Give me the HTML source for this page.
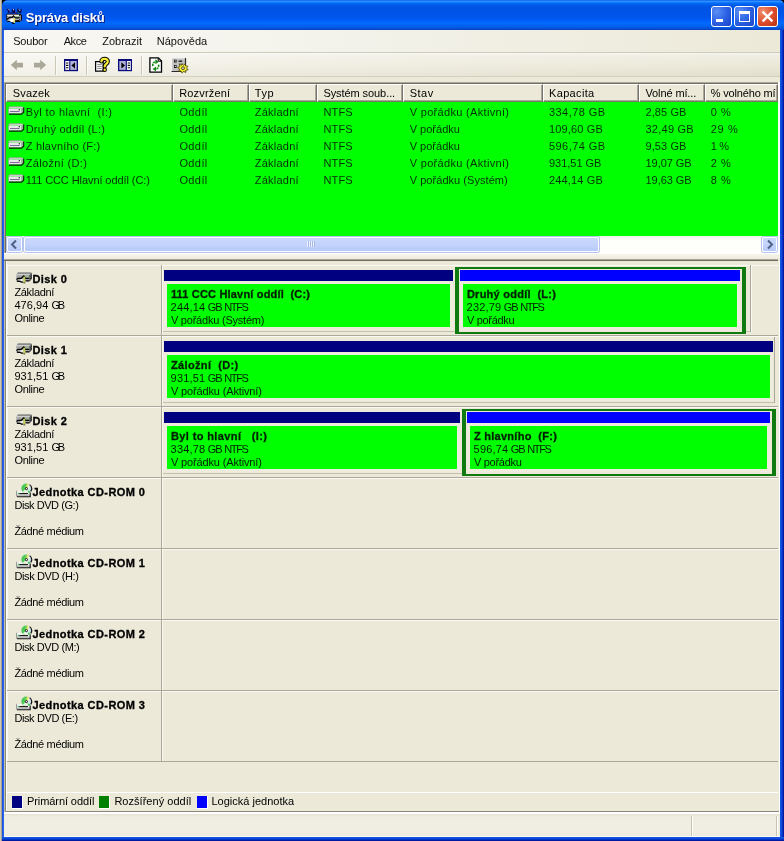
<!DOCTYPE html>
<html><head><meta charset="utf-8"><title>Správa disků</title>
<style>
*{box-sizing:border-box;margin:0;padding:0}
html,body{width:784px;height:841px;overflow:hidden;background:#000}
body{font-family:"Liberation Sans","DejaVu Sans",sans-serif;font-size:11px;color:#000;position:relative}
div,span,svg{position:absolute}
#strip{left:0;top:0;width:2px;height:841px;background:linear-gradient(to right,#cfc8b2 0,#cfc8b2 1px,#a6a194 1px,#a6a194 2px)}
#win{left:2px;top:0;width:782px;height:841px;background:#0a3fd8;border-radius:6px 5px 0 0;overflow:hidden}
#title{left:0;top:0;width:782px;height:30px;background:linear-gradient(to bottom,#0058ee 0%,#3593ff 4%,#288eff 6%,#127dff 8%,#036ffc 10%,#0262ee 14%,#0057e5 20%,#0054e3 24%,#0055eb 56%,#005bf5 66%,#026afe 76%,#0062ef 86%,#0058e0 93%,#0b48cc 97%,#0a40c0 100%)}
.tt{font:bold 13px "Liberation Sans",sans-serif;color:#fff;text-shadow:1px 1px 0 #0a1883}
.cb{top:6px;width:21px;height:21px;border:1px solid #fff;border-radius:3px;background:radial-gradient(circle at 25% 25%,#5a8ff5 0,#2c62e4 50%,#1a44c4 100%)}
#client{left:2px;top:30px;width:776px;height:807px;background:#ece9d8}
#fl{left:0;top:30px;width:2px;height:811px;background:linear-gradient(to right,#1a4edc,#2a6af0)}
#fr{left:778px;top:30px;width:4px;height:811px;background:linear-gradient(to right,#1557e0 0,#0a44d8 50%,#0023b8 75%,#00138c 100%)}
#fb{left:0;top:837px;width:782px;height:4px;background:linear-gradient(to bottom,#1557e0 0,#0a44d8 50%,#0023b8 75%,#00138c 100%)}
.t{white-space:pre}
.row{color:#043004}
.b{font-weight:bold;-webkit-text-stroke:.3px currentColor}
.p{color:#012001}
</style></head><body>
<div id="strip"></div>
<div id="win"><div id="title"></div>
<div id="client"></div><div id="fl"></div><div id="fr"></div><div id="fb"></div></div>
<div id="pg" style="left:0;top:0;width:784px;height:841px;will-change:transform">
<span class="t tt" style="left:25.70px;top:10px;letter-spacing:-0.176px;">Správa disků</span>
<svg width="17" height="17" viewBox="0 0 17 17" style="left:6px;top:8px"><path d="M.5 1.5L2.5 .5L4 2.5L3 4.5H6.5L5.5 2L7.5 .8L9 1.5V4.5H11.5L11 1L12.5 .5L13.5 2.5L15.5 .5V4L14.5 5.5H1L2.5 3.5Z" fill="#0a0a50"/><path d="M2.5 1.2L3.6 2.4M13 1.6L14.2 2.8M7 2L8 1.4" stroke="#fff" stroke-width=".9"/><path d="M11.5 4.2L13.5 5.2" stroke="#2a9a5a" stroke-width="1"/><path d="M9 4.5L10 5.2" stroke="#b02040" stroke-width="1"/><path d="M.8 6.5H13.5L15.5 7V12L14 13.5H1.5L.8 12.5Z" fill="#b4b4b4" stroke="#000" stroke-width=".9"/><path d="M1.2 7.3H13" stroke="#f0f0f0" stroke-width="1.3"/><path d="M9 8.2H13V9.6H9Z" fill="#8fbf8f"/><path d="M13.6 7.2V13M15 7.4V12.4" stroke="#000" stroke-width=".9" stroke-dasharray="1 1"/><path d="M1 11.5L3.5 9.5H6L7.5 8L9 9.8H13" fill="none" stroke="#000" stroke-width="1.3"/><path d="M4 12.8h9.5" stroke="#000" stroke-width="1.3"/><ellipse cx="6.2" cy="12.3" rx="2.3" ry="2" fill="#fff"/><path d="M5.5 14.5L7.5 15.5L9 14.5" fill="none" stroke="#000" stroke-width="1.2"/><rect x="7.6" y="9.8" width="1.5" height="5.2" fill="#e8e060"/></svg>
<div class="cb" style="left:711px;top:6px;width:21px;height:21px;"><div style="left:4px;top:12px;width:7px;height:3px;background:#fff"></div></div>
<div class="cb" style="left:734px;top:6px;width:21px;height:21px;"><div style="left:4px;top:4px;width:11px;height:11px;border:1px solid #fff;border-top-width:3px"></div></div>
<div class="cb" style="left:757px;top:6px;width:21px;height:21px;background:radial-gradient(circle at 25% 25%,#f09070 0,#dd5030 50%,#b8300c 100%)"><svg width="19" height="19" viewBox="0 0 19 19" style="left:0;top:0"><path d="M4.6 4.6L14.4 14.4M14.4 4.6L4.6 14.4" stroke="#fff" stroke-width="2.3" stroke-linecap="butt"/></svg></div>
<div style="left:4px;top:30px;width:776px;height:22px;background:linear-gradient(to right,#f8f7f3 0,#f3f2ea 45%,#ece9d8 100%)"></div>
<span class="t" style="left:13.20px;top:35px;letter-spacing:-0.197px;color:#111">Soubor</span>
<span class="t" style="left:63.70px;top:35px;letter-spacing:-0.423px;color:#111">Akce</span>
<span class="t" style="left:102.20px;top:35px;letter-spacing:0.007px;color:#111">Zobrazit</span>
<span class="t" style="left:156.70px;top:35px;letter-spacing:0.049px;color:#111">Nápověda</span>
<div style="left:4px;top:52px;width:776px;height:1px;background:#cfccbe"></div>
<div style="left:4px;top:53px;width:776px;height:23px;background:linear-gradient(to right,rgba(255,255,255,.55) 0,rgba(255,255,255,.25) 45%,rgba(255,255,255,0) 100%),linear-gradient(to bottom,#f6f5ee 0,#efede2 3px,#ece9d9 50%,#e2dfcd 100%)"></div>
<div style="left:4px;top:76px;width:776px;height:1px;background:#d2cfbf"></div>
<div style="left:55px;top:56px;width:1px;height:19px;background:#cbc8b8"></div>
<div style="left:56px;top:56px;width:1px;height:19px;background:#fbfaf7"></div>
<div style="left:86px;top:56px;width:1px;height:19px;background:#cbc8b8"></div>
<div style="left:87px;top:56px;width:1px;height:19px;background:#fbfaf7"></div>
<div style="left:141px;top:56px;width:1px;height:19px;background:#cbc8b8"></div>
<div style="left:142px;top:56px;width:1px;height:19px;background:#fbfaf7"></div>
<svg width="200" height="24" viewBox="0 0 200 24" style="left:0;top:53px"><path d="M10.8 12L16.8 6.8V9.8H23V14.4H16.8V17.3Z" fill="#aca899"/><path d="M46.2 12L40.2 6.8V9.8H34V14.4H40.2V17.3Z" fill="#aca899"/><rect x="64" y="6" width="14" height="12.2" fill="#0a0a7a"/><rect x="65.3" y="8" width="3.9" height="8.9" fill="#fff"/><rect x="70.3" y="8" width="6.4" height="8.9" fill="#b2b2d8"/><path d="M66 10h2.4M66 12.4h2.4M66 14.8h2.4" stroke="#000" stroke-width="1.1"/><path d="M71.4 12.4L75 9.2V15.6Z" fill="#000"/><path d="M95.6 8.6h7.6v9.6h-7.6z" fill="#fff" stroke="#000" stroke-width="1.2"/><path d="M97.2 11.4h4.6M97.2 13.4h4.6M97.2 15.4h4.6" stroke="#777" stroke-width=".9"/><path d="M101.4 8.4C101.4 5.2 107.8 5 107.8 8.4C107.8 10.8 104.7 11 104.7 13.4" fill="none" stroke="#000" stroke-width="4.2" stroke-linecap="round"/><circle cx="104.7" cy="16.8" r="2.2" fill="#000"/><path d="M101.4 8.4C101.4 5.2 107.8 5 107.8 8.4C107.8 10.8 104.7 11 104.7 13.4" fill="none" stroke="#f6ee30" stroke-width="2.2" stroke-linecap="round"/><circle cx="104.7" cy="16.8" r="1.2" fill="#f6ee30"/><rect x="118" y="6" width="14" height="12.2" fill="#0a0a7a"/><rect x="126.9" y="8" width="3.9" height="8.9" fill="#fff"/><rect x="119.3" y="8" width="6.4" height="8.9" fill="#b2b2d8"/><path d="M127.7 10h2.4M127.7 12.4h2.4M127.7 14.8h2.4" stroke="#000" stroke-width="1.1"/><path d="M125 12.4L121.4 9.2V15.6Z" fill="#000"/><path d="M149.9 4.9H158.4L161.5 8V19.2H149.9Z" fill="#fff" stroke="#000" stroke-width="1.3"/><path d="M158.2 5V8.2H161.4" fill="none" stroke="#000" stroke-width="1"/><path d="M152.8 13.2C152.4 10.2 153.8 8.8 156 8.8" fill="none" stroke="#158a15" stroke-width="1.6" stroke-dasharray="2.2 .8"/><path d="M155.4 6.2L158.8 8.7L155.4 11.2Z" fill="#158a15"/><path d="M158.6 11.6C159 14.6 157.6 16 155.4 16" fill="none" stroke="#158a15" stroke-width="1.6" stroke-dasharray="2.2 .8"/><path d="M156 13.5L152.6 16L156 18.5Z" fill="#158a15"/><rect x="171.5" y="5" width="14" height="13.5" fill="#c2c2c2"/><path d="M171.5 18.5V5H185.5" fill="none" stroke="#f4f4f4" stroke-width="1.2"/><path d="M171.5 18.5H185.5V5" fill="none" stroke="#2a2a2a" stroke-width="1.2"/><path d="M174 6.8h2.6v2.8h-2.6zM174 12h2.6v3h-2.6z" fill="#111"/><path d="M174.8 7.6h1v1h-1zM174.8 12.8h1v1.2h-1z" fill="#fff"/><path d="M178.6 8.2h3.6" stroke="#111" stroke-width="1.3"/><path d="M178.4 10.8h5" stroke="#888" stroke-width=".8"/><path d="M182 10.6L183.4 12.4L185.2 10.8L185.6 13L188 13.2L186.6 15L188.2 16.8L185.8 17.2L185.6 19.6L183.6 18.4L182 20.2L181 18L178.6 18.2L179.6 16L177.6 14.6L179.8 13.6L179.6 11.2L181.6 12.2Z" fill="#f4ec30" stroke="#3a3400" stroke-width=".7"/><circle cx="183" cy="15.2" r="1.5" fill="#c2c2c2" stroke="#3a3400" stroke-width=".7"/></svg>
<div style="left:4px;top:82px;width:776px;height:172px;background:#fff"></div>
<div style="left:4px;top:82px;width:774px;height:171px;background:#aca899"></div>
<div style="left:5px;top:83px;width:773px;height:170px;background:#716f64"></div>
<div style="left:6px;top:84px;width:772px;height:169px;background:#00ff00"></div>
<div style="left:6px;top:84px;width:772px;height:18px;background:#ece9d8"></div>
<div style="left:6px;top:84px;width:167px;height:18px;border-top:1px solid #fff;border-left:1px solid #fff;border-right:1px solid #77756a;border-bottom:1px solid #77756a;box-shadow:inset -1px -1px 0 #aca899"></div>
<span class="t" style="left:12.70px;top:87px;letter-spacing:0.184px;">Svazek</span>
<div style="left:173px;top:84px;width:76px;height:18px;border-top:1px solid #fff;border-left:1px solid #fff;border-right:1px solid #77756a;border-bottom:1px solid #77756a;box-shadow:inset -1px -1px 0 #aca899"></div>
<span class="t" style="left:179.20px;top:87px;letter-spacing:0.184px;">Rozvržení</span>
<div style="left:249px;top:84px;width:68px;height:18px;border-top:1px solid #fff;border-left:1px solid #fff;border-right:1px solid #77756a;border-bottom:1px solid #77756a;box-shadow:inset -1px -1px 0 #aca899"></div>
<span class="t" style="left:254.70px;top:87px;letter-spacing:0.633px;">Typ</span>
<div style="left:317px;top:84px;width:86px;height:18px;border-top:1px solid #fff;border-left:1px solid #fff;border-right:1px solid #77756a;border-bottom:1px solid #77756a;box-shadow:inset -1px -1px 0 #aca899"></div>
<span class="t" style="left:323.45px;top:87px;letter-spacing:-0.078px;">Systém soub...</span>
<div style="left:403px;top:84px;width:140px;height:18px;border-top:1px solid #fff;border-left:1px solid #fff;border-right:1px solid #77756a;border-bottom:1px solid #77756a;box-shadow:inset -1px -1px 0 #aca899"></div>
<span class="t" style="left:409.70px;top:87px;letter-spacing:0.495px;">Stav</span>
<div style="left:543px;top:84px;width:96px;height:18px;border-top:1px solid #fff;border-left:1px solid #fff;border-right:1px solid #77756a;border-bottom:1px solid #77756a;box-shadow:inset -1px -1px 0 #aca899"></div>
<span class="t" style="left:549.00px;top:87px;letter-spacing:0.341px;">Kapacita</span>
<div style="left:639px;top:84px;width:66px;height:18px;border-top:1px solid #fff;border-left:1px solid #fff;border-right:1px solid #77756a;border-bottom:1px solid #77756a;box-shadow:inset -1px -1px 0 #aca899"></div>
<span class="t" style="left:645.50px;top:87px;letter-spacing:-0.118px;">Volné mí...</span>
<div style="left:705px;top:84px;width:73px;height:18px;border-top:1px solid #fff;border-left:1px solid #fff;border-right:1px solid #77756a;border-bottom:1px solid #77756a;box-shadow:inset -1px -1px 0 #aca899"></div>
<span class="t" style="left:710.70px;top:87px;letter-spacing:-0.151px;">% volného mí</span>
<svg width="17" height="10" viewBox="0 0 17 10" style="left:8px;top:106px"><path d="M1.4 .7H14L15.6 1.2L13.5 2.6H.7Z" fill="#cfcfcf"/><path d="M.7 2.6H13.5V7.6H.7Z" fill="#ece6ee"/><path d="M13.5 2.6L15.6 1.2V6L13.5 7.8Z" fill="#a9a2aa"/><path d="M2 5.5H11.6" stroke="#6e5f8c" stroke-width=".9"/><circle cx="11.3" cy="3.7" r=".7" fill="#222"/><path d="M1 8.1H13.6L15.7 6.2V1.4" fill="none" stroke="#0a1a0a" stroke-width="1.1"/><path d="M.6 7.6V2.5L1.4 .6H14" fill="none" stroke="#9a9a9a" stroke-width=".6"/></svg>
<span class="t row" style="left:25.70px;top:106px;letter-spacing:0.379px;">Byl to hlavní  (I:)</span>
<span class="t row" style="left:179.40px;top:106px;letter-spacing:0.401px;">Oddíl</span>
<span class="t row" style="left:254.70px;top:106px;letter-spacing:0.257px;">Základní</span>
<span class="t row" style="left:323.45px;top:106px;letter-spacing:0.172px;">NTFS</span>
<span class="t row" style="left:409.70px;top:106px;letter-spacing:0.317px;">V pořádku (Aktivní)</span>
<span class="t row" style="left:549.00px;top:106px;letter-spacing:0.438px;">334,78 GB</span>
<span class="t row" style="left:645.50px;top:106px;letter-spacing:0.090px;">2,85 GB</span>
<span class="t row" style="left:710.70px;top:106px;letter-spacing:0.516px;">0 %</span>
<svg width="17" height="10" viewBox="0 0 17 10" style="left:8px;top:123px"><path d="M1.4 .7H14L15.6 1.2L13.5 2.6H.7Z" fill="#cfcfcf"/><path d="M.7 2.6H13.5V7.6H.7Z" fill="#ece6ee"/><path d="M13.5 2.6L15.6 1.2V6L13.5 7.8Z" fill="#a9a2aa"/><path d="M2 5.5H11.6" stroke="#6e5f8c" stroke-width=".9"/><circle cx="11.3" cy="3.7" r=".7" fill="#222"/><path d="M1 8.1H13.6L15.7 6.2V1.4" fill="none" stroke="#0a1a0a" stroke-width="1.1"/><path d="M.6 7.6V2.5L1.4 .6H14" fill="none" stroke="#9a9a9a" stroke-width=".6"/></svg>
<span class="t row" style="left:25.70px;top:123px;letter-spacing:0.226px;">Druhý oddíl (L:)</span>
<span class="t row" style="left:179.40px;top:123px;letter-spacing:0.401px;">Oddíl</span>
<span class="t row" style="left:254.70px;top:123px;letter-spacing:0.257px;">Základní</span>
<span class="t row" style="left:323.45px;top:123px;letter-spacing:0.172px;">NTFS</span>
<span class="t row" style="left:409.70px;top:123px;letter-spacing:0.012px;">V pořádku</span>
<span class="t row" style="left:549.00px;top:123px;letter-spacing:0.163px;">109,60 GB</span>
<span class="t row" style="left:645.50px;top:123px;letter-spacing:0.245px;">32,49 GB</span>
<span class="t row" style="left:710.70px;top:123px;letter-spacing:0.641px;">29 %</span>
<svg width="17" height="10" viewBox="0 0 17 10" style="left:8px;top:140px"><path d="M1.4 .7H14L15.6 1.2L13.5 2.6H.7Z" fill="#cfcfcf"/><path d="M.7 2.6H13.5V7.6H.7Z" fill="#ece6ee"/><path d="M13.5 2.6L15.6 1.2V6L13.5 7.8Z" fill="#a9a2aa"/><path d="M2 5.5H11.6" stroke="#6e5f8c" stroke-width=".9"/><circle cx="11.3" cy="3.7" r=".7" fill="#222"/><path d="M1 8.1H13.6L15.7 6.2V1.4" fill="none" stroke="#0a1a0a" stroke-width="1.1"/><path d="M.6 7.6V2.5L1.4 .6H14" fill="none" stroke="#9a9a9a" stroke-width=".6"/></svg>
<span class="t row" style="left:25.70px;top:140px;letter-spacing:0.212px;">Z hlavního (F:)</span>
<span class="t row" style="left:179.40px;top:140px;letter-spacing:0.401px;">Oddíl</span>
<span class="t row" style="left:254.70px;top:140px;letter-spacing:0.257px;">Základní</span>
<span class="t row" style="left:323.45px;top:140px;letter-spacing:0.172px;">NTFS</span>
<span class="t row" style="left:409.70px;top:140px;letter-spacing:0.012px;">V pořádku</span>
<span class="t row" style="left:549.00px;top:140px;letter-spacing:0.438px;">596,74 GB</span>
<span class="t row" style="left:645.50px;top:140px;letter-spacing:0.090px;">9,53 GB</span>
<span class="t row" style="left:710.70px;top:140px;letter-spacing:-0.334px;">1 %</span>
<svg width="17" height="10" viewBox="0 0 17 10" style="left:8px;top:157px"><path d="M1.4 .7H14L15.6 1.2L13.5 2.6H.7Z" fill="#cfcfcf"/><path d="M.7 2.6H13.5V7.6H.7Z" fill="#ece6ee"/><path d="M13.5 2.6L15.6 1.2V6L13.5 7.8Z" fill="#a9a2aa"/><path d="M2 5.5H11.6" stroke="#6e5f8c" stroke-width=".9"/><circle cx="11.3" cy="3.7" r=".7" fill="#222"/><path d="M1 8.1H13.6L15.7 6.2V1.4" fill="none" stroke="#0a1a0a" stroke-width="1.1"/><path d="M.6 7.6V2.5L1.4 .6H14" fill="none" stroke="#9a9a9a" stroke-width=".6"/></svg>
<span class="t row" style="left:25.70px;top:157px;letter-spacing:0.339px;">Záložní (D:)</span>
<span class="t row" style="left:179.40px;top:157px;letter-spacing:0.401px;">Oddíl</span>
<span class="t row" style="left:254.70px;top:157px;letter-spacing:0.257px;">Základní</span>
<span class="t row" style="left:323.45px;top:157px;letter-spacing:0.172px;">NTFS</span>
<span class="t row" style="left:409.70px;top:157px;letter-spacing:0.317px;">V pořádku (Aktivní)</span>
<span class="t row" style="left:549.00px;top:157px;letter-spacing:-0.024px;">931,51 GB</span>
<span class="t row" style="left:645.50px;top:157px;letter-spacing:-0.041px;">19,07 GB</span>
<span class="t row" style="left:710.70px;top:157px;letter-spacing:0.516px;">2 %</span>
<svg width="17" height="10" viewBox="0 0 17 10" style="left:8px;top:174px"><path d="M1.4 .7H14L15.6 1.2L13.5 2.6H.7Z" fill="#cfcfcf"/><path d="M.7 2.6H13.5V7.6H.7Z" fill="#ece6ee"/><path d="M13.5 2.6L15.6 1.2V6L13.5 7.8Z" fill="#a9a2aa"/><path d="M2 5.5H11.6" stroke="#6e5f8c" stroke-width=".9"/><circle cx="11.3" cy="3.7" r=".7" fill="#222"/><path d="M1 8.1H13.6L15.7 6.2V1.4" fill="none" stroke="#0a1a0a" stroke-width="1.1"/><path d="M.6 7.6V2.5L1.4 .6H14" fill="none" stroke="#9a9a9a" stroke-width=".6"/></svg>
<span class="t row" style="left:25.70px;top:174px;letter-spacing:-0.081px;">111 CCC Hlavní oddíl (C:)</span>
<span class="t row" style="left:179.40px;top:174px;letter-spacing:0.401px;">Oddíl</span>
<span class="t row" style="left:254.70px;top:174px;letter-spacing:0.257px;">Základní</span>
<span class="t row" style="left:323.45px;top:174px;letter-spacing:0.172px;">NTFS</span>
<span class="t row" style="left:409.70px;top:174px;letter-spacing:0.047px;">V pořádku (Systém)</span>
<span class="t row" style="left:549.00px;top:174px;letter-spacing:0.163px;">244,14 GB</span>
<span class="t row" style="left:645.50px;top:174px;letter-spacing:-0.041px;">19,63 GB</span>
<span class="t row" style="left:710.70px;top:174px;letter-spacing:0.516px;">8 %</span>
<div style="left:6px;top:236px;width:772px;height:17px;background:linear-gradient(to bottom,#f3f1ec 0,#fefefb 30%,#fefefb 100%)"></div>
<div style="left:7px;top:237px;width:15px;height:15px;border:1px solid #fff;border-radius:2px;background:linear-gradient(to bottom,#cbd8fb 0,#c1d2fb 60%,#b6c8f6 100%);box-shadow:0 0 0 1px #b4c4ee"><svg width="13" height="13" viewBox="0 0 13 13" style="left:0;top:0"><path d="M8 2.5L4 6.5L8 10.5" fill="none" stroke="#4d6185" stroke-width="2"/></svg></div>
<div style="left:762px;top:237px;width:15px;height:15px;border:1px solid #fff;border-radius:2px;background:linear-gradient(to bottom,#cbd8fb 0,#c1d2fb 60%,#b6c8f6 100%);box-shadow:0 0 0 1px #b4c4ee"><svg width="13" height="13" viewBox="0 0 13 13" style="left:0;top:0"><path d="M5 2.5L9 6.5L5 10.5" fill="none" stroke="#4d6185" stroke-width="2"/></svg></div>
<div style="left:24px;top:237px;width:575px;height:15px;border:1px solid #fff;border-radius:2px;background:linear-gradient(to bottom,#cbd8fb 0,#c1d2fb 60%,#b6c8f6 100%);box-shadow:0 0 0 1px #b4c4ee"><div style="left:282px;top:3px;width:8px;height:6px;background:repeating-linear-gradient(to right,#eef3fe 0,#eef3fe 1px,#a5b8e8 1px,#a5b8e8 2px)"></div></div>
<div style="left:4px;top:254px;width:776px;height:5px;background:linear-gradient(to bottom,#f6f4ea,#efecdd)"></div>
<div style="left:4px;top:259px;width:774px;height:1px;background:#aca899"></div>
<div style="left:4px;top:260px;width:774px;height:1px;background:#716f64"></div>
<div style="left:4px;top:261px;width:1px;height:551px;background:#c2bfae"></div>
<div style="left:5px;top:261px;width:1px;height:551px;background:#8a877a"></div>
<div style="left:6px;top:261px;width:1px;height:551px;background:#fff"></div>
<div style="left:779px;top:261px;width:1px;height:551px;background:#fff"></div>
<div style="left:7px;top:265px;width:771px;height:1px;background:#faf9f3"></div>
<div style="left:7px;top:266px;width:1px;height:69px;background:#f6f5ee"></div>
<div style="left:161px;top:265px;width:1px;height:70px;background:#aca899"></div>
<div style="left:162px;top:265px;width:1px;height:70px;background:#f8f7f1"></div>
<div style="left:7px;top:335px;width:771px;height:1px;background:#aca899"></div>
<svg width="17" height="12" viewBox="0 0 17 12" style="left:16px;top:272px"><path d="M1.8 .2H15L15.8 .9L13.5 3.2H.3Z" fill="#8c8c8c"/><path d="M.9 1.9H14L13.2 3.2H.3Z" fill="#cfcfcf"/><path d="M.3 3.2H13.5V9H.3Z" fill="#a6a6a6"/><path d="M8.8 3.4H13.3V6H8.8Z" fill="#9cb39c"/><path d="M13.5 3.2L15.9 .9V6.8L13.5 9.6Z" fill="#1c1c1c"/><path d="M14.3 3.2v.9M15.1 2.2v.9M14.3 5.2v.9M15.1 4.2v.9M14.3 7.2v.9M15.1 6.2v.5" stroke="#a0a0a0" stroke-width=".7"/><path d="M3.4 8.5L5.2 7H7.4V9.7H4.8Z" fill="#e9e9e9"/><path d="M.4 7.5L2.2 6.3H5.2L7.8 4L9.4 6.3H13.2" fill="none" stroke="#000" stroke-width="1.3"/><path d="M.9 8.9L1.8 9.3H4.2L5.4 10.1H7.4M9.4 8.9H13.4" fill="none" stroke="#000" stroke-width="1.3"/><rect x="7.5" y="4.7" width="1.7" height="6.3" fill="#dde45e"/><path d="M7.5 6H9.2M7.5 7.8H9.2M7.5 9.6H9.2" stroke="#8a9a30" stroke-width=".5"/><path d="M7.4 10.9H9.3" stroke="#222" stroke-width=".8"/></svg>
<span class="t b" style="left:32.40px;top:273px;letter-spacing:0.436px;">Disk 0</span>
<span class="t" style="left:14.40px;top:286px;letter-spacing:-0.315px;">Základní</span>
<span class="t" style="left:14.40px;top:299px;letter-spacing:0.049px;">476,94</span>
<span class="t" style="left:51.50px;top:299px;letter-spacing:-2.306px;">GB</span>
<span class="t" style="left:14.40px;top:312px;letter-spacing:-0.319px;">Online</span>
<div style="left:7px;top:336px;width:771px;height:1px;background:#faf9f3"></div>
<div style="left:7px;top:337px;width:1px;height:69px;background:#f6f5ee"></div>
<div style="left:161px;top:336px;width:1px;height:70px;background:#aca899"></div>
<div style="left:162px;top:336px;width:1px;height:70px;background:#f8f7f1"></div>
<div style="left:7px;top:406px;width:771px;height:1px;background:#aca899"></div>
<svg width="17" height="12" viewBox="0 0 17 12" style="left:16px;top:343px"><path d="M1.8 .2H15L15.8 .9L13.5 3.2H.3Z" fill="#8c8c8c"/><path d="M.9 1.9H14L13.2 3.2H.3Z" fill="#cfcfcf"/><path d="M.3 3.2H13.5V9H.3Z" fill="#a6a6a6"/><path d="M8.8 3.4H13.3V6H8.8Z" fill="#9cb39c"/><path d="M13.5 3.2L15.9 .9V6.8L13.5 9.6Z" fill="#1c1c1c"/><path d="M14.3 3.2v.9M15.1 2.2v.9M14.3 5.2v.9M15.1 4.2v.9M14.3 7.2v.9M15.1 6.2v.5" stroke="#a0a0a0" stroke-width=".7"/><path d="M3.4 8.5L5.2 7H7.4V9.7H4.8Z" fill="#e9e9e9"/><path d="M.4 7.5L2.2 6.3H5.2L7.8 4L9.4 6.3H13.2" fill="none" stroke="#000" stroke-width="1.3"/><path d="M.9 8.9L1.8 9.3H4.2L5.4 10.1H7.4M9.4 8.9H13.4" fill="none" stroke="#000" stroke-width="1.3"/><rect x="7.5" y="4.7" width="1.7" height="6.3" fill="#dde45e"/><path d="M7.5 6H9.2M7.5 7.8H9.2M7.5 9.6H9.2" stroke="#8a9a30" stroke-width=".5"/><path d="M7.4 10.9H9.3" stroke="#222" stroke-width=".8"/></svg>
<span class="t b" style="left:32.40px;top:344px;letter-spacing:0.436px;">Disk 1</span>
<span class="t" style="left:14.40px;top:357px;letter-spacing:-0.315px;">Základní</span>
<span class="t" style="left:14.40px;top:370px;letter-spacing:0.049px;">931,51</span>
<span class="t" style="left:51.50px;top:370px;letter-spacing:-2.306px;">GB</span>
<span class="t" style="left:14.40px;top:383px;letter-spacing:-0.319px;">Online</span>
<div style="left:7px;top:407px;width:771px;height:1px;background:#faf9f3"></div>
<div style="left:7px;top:408px;width:1px;height:69px;background:#f6f5ee"></div>
<div style="left:161px;top:407px;width:1px;height:70px;background:#aca899"></div>
<div style="left:162px;top:407px;width:1px;height:70px;background:#f8f7f1"></div>
<div style="left:7px;top:477px;width:771px;height:1px;background:#aca899"></div>
<svg width="17" height="12" viewBox="0 0 17 12" style="left:16px;top:414px"><path d="M1.8 .2H15L15.8 .9L13.5 3.2H.3Z" fill="#8c8c8c"/><path d="M.9 1.9H14L13.2 3.2H.3Z" fill="#cfcfcf"/><path d="M.3 3.2H13.5V9H.3Z" fill="#a6a6a6"/><path d="M8.8 3.4H13.3V6H8.8Z" fill="#9cb39c"/><path d="M13.5 3.2L15.9 .9V6.8L13.5 9.6Z" fill="#1c1c1c"/><path d="M14.3 3.2v.9M15.1 2.2v.9M14.3 5.2v.9M15.1 4.2v.9M14.3 7.2v.9M15.1 6.2v.5" stroke="#a0a0a0" stroke-width=".7"/><path d="M3.4 8.5L5.2 7H7.4V9.7H4.8Z" fill="#e9e9e9"/><path d="M.4 7.5L2.2 6.3H5.2L7.8 4L9.4 6.3H13.2" fill="none" stroke="#000" stroke-width="1.3"/><path d="M.9 8.9L1.8 9.3H4.2L5.4 10.1H7.4M9.4 8.9H13.4" fill="none" stroke="#000" stroke-width="1.3"/><rect x="7.5" y="4.7" width="1.7" height="6.3" fill="#dde45e"/><path d="M7.5 6H9.2M7.5 7.8H9.2M7.5 9.6H9.2" stroke="#8a9a30" stroke-width=".5"/><path d="M7.4 10.9H9.3" stroke="#222" stroke-width=".8"/></svg>
<span class="t b" style="left:32.40px;top:415px;letter-spacing:0.436px;">Disk 2</span>
<span class="t" style="left:14.40px;top:428px;letter-spacing:-0.315px;">Základní</span>
<span class="t" style="left:14.40px;top:441px;letter-spacing:0.049px;">931,51</span>
<span class="t" style="left:51.50px;top:441px;letter-spacing:-2.306px;">GB</span>
<span class="t" style="left:14.40px;top:454px;letter-spacing:-0.319px;">Online</span>
<div style="left:7px;top:478px;width:771px;height:1px;background:#faf9f3"></div>
<div style="left:7px;top:479px;width:1px;height:69px;background:#f6f5ee"></div>
<div style="left:161px;top:478px;width:1px;height:70px;background:#aca899"></div>
<div style="left:162px;top:478px;width:1px;height:70px;background:#f8f7f1"></div>
<div style="left:7px;top:548px;width:771px;height:1px;background:#aca899"></div>
<svg width="17" height="15" viewBox="0 0 17 15" style="left:16px;top:483px"><defs><linearGradient id="cdg" x1="0" y1=".2" x2="1" y2=".5"><stop offset="0" stop-color="#2fc24a"/><stop offset=".4" stop-color="#5fd060"/><stop offset=".55" stop-color="#f2e65a"/><stop offset=".7" stop-color="#e8f0f0"/><stop offset="1" stop-color="#b8d8e0"/></linearGradient></defs><circle cx="10.4" cy="5.6" r="5" fill="url(#cdg)"/><path d="M5.8 9.6L10.4 5.6L12.6 9.8Z" fill="#e9efe9"/><path d="M11.6 7.2L14.4 8.6L12.6 10.2Z" fill="#38c848"/><path d="M13.6 1.6A5.2 5.2 0 0 1 14.8 8.4" fill="none" stroke="#111" stroke-width="1.2"/><circle cx="10.4" cy="5.6" r="1.1" fill="#fff" stroke="#111" stroke-width="1"/><path d="M1 8H5.6L7 10H14.3V13.4H1Z" fill="#f4f4f4"/><path d="M1 11.4H14.3V13.4H1Z" fill="#bdbdbd"/><path d="M3.2 10.6H12" stroke="#111" stroke-width="1.1"/><path d="M1.8 10.4H3.4" stroke="#2cb43c" stroke-width="1.1"/><path d="M.6 7.8V13.6" stroke="#8a8a8a" stroke-width=".9"/><path d="M1 13.8H14.2V9.6" fill="none" stroke="#111" stroke-width="1.1"/></svg>
<span class="t b" style="left:32.40px;top:486px;letter-spacing:0.428px;">Jednotka CD-ROM 0</span>
<span class="t" style="left:14.40px;top:499px;letter-spacing:-0.431px;">Disk DVD (G:)</span>
<span class="t" style="left:14.40px;top:525px;letter-spacing:-0.343px;">Žádné médium</span>
<div style="left:7px;top:549px;width:771px;height:1px;background:#faf9f3"></div>
<div style="left:7px;top:550px;width:1px;height:69px;background:#f6f5ee"></div>
<div style="left:161px;top:549px;width:1px;height:70px;background:#aca899"></div>
<div style="left:162px;top:549px;width:1px;height:70px;background:#f8f7f1"></div>
<div style="left:7px;top:619px;width:771px;height:1px;background:#aca899"></div>
<svg width="17" height="15" viewBox="0 0 17 15" style="left:16px;top:554px"><defs><linearGradient id="cdg" x1="0" y1=".2" x2="1" y2=".5"><stop offset="0" stop-color="#2fc24a"/><stop offset=".4" stop-color="#5fd060"/><stop offset=".55" stop-color="#f2e65a"/><stop offset=".7" stop-color="#e8f0f0"/><stop offset="1" stop-color="#b8d8e0"/></linearGradient></defs><circle cx="10.4" cy="5.6" r="5" fill="url(#cdg)"/><path d="M5.8 9.6L10.4 5.6L12.6 9.8Z" fill="#e9efe9"/><path d="M11.6 7.2L14.4 8.6L12.6 10.2Z" fill="#38c848"/><path d="M13.6 1.6A5.2 5.2 0 0 1 14.8 8.4" fill="none" stroke="#111" stroke-width="1.2"/><circle cx="10.4" cy="5.6" r="1.1" fill="#fff" stroke="#111" stroke-width="1"/><path d="M1 8H5.6L7 10H14.3V13.4H1Z" fill="#f4f4f4"/><path d="M1 11.4H14.3V13.4H1Z" fill="#bdbdbd"/><path d="M3.2 10.6H12" stroke="#111" stroke-width="1.1"/><path d="M1.8 10.4H3.4" stroke="#2cb43c" stroke-width="1.1"/><path d="M.6 7.8V13.6" stroke="#8a8a8a" stroke-width=".9"/><path d="M1 13.8H14.2V9.6" fill="none" stroke="#111" stroke-width="1.1"/></svg>
<span class="t b" style="left:32.40px;top:557px;letter-spacing:0.428px;">Jednotka CD-ROM 1</span>
<span class="t" style="left:14.40px;top:570px;letter-spacing:-0.380px;">Disk DVD (H:)</span>
<span class="t" style="left:14.40px;top:596px;letter-spacing:-0.343px;">Žádné médium</span>
<div style="left:7px;top:620px;width:771px;height:1px;background:#faf9f3"></div>
<div style="left:7px;top:621px;width:1px;height:69px;background:#f6f5ee"></div>
<div style="left:161px;top:620px;width:1px;height:70px;background:#aca899"></div>
<div style="left:162px;top:620px;width:1px;height:70px;background:#f8f7f1"></div>
<div style="left:7px;top:690px;width:771px;height:1px;background:#aca899"></div>
<svg width="17" height="15" viewBox="0 0 17 15" style="left:16px;top:625px"><defs><linearGradient id="cdg" x1="0" y1=".2" x2="1" y2=".5"><stop offset="0" stop-color="#2fc24a"/><stop offset=".4" stop-color="#5fd060"/><stop offset=".55" stop-color="#f2e65a"/><stop offset=".7" stop-color="#e8f0f0"/><stop offset="1" stop-color="#b8d8e0"/></linearGradient></defs><circle cx="10.4" cy="5.6" r="5" fill="url(#cdg)"/><path d="M5.8 9.6L10.4 5.6L12.6 9.8Z" fill="#e9efe9"/><path d="M11.6 7.2L14.4 8.6L12.6 10.2Z" fill="#38c848"/><path d="M13.6 1.6A5.2 5.2 0 0 1 14.8 8.4" fill="none" stroke="#111" stroke-width="1.2"/><circle cx="10.4" cy="5.6" r="1.1" fill="#fff" stroke="#111" stroke-width="1"/><path d="M1 8H5.6L7 10H14.3V13.4H1Z" fill="#f4f4f4"/><path d="M1 11.4H14.3V13.4H1Z" fill="#bdbdbd"/><path d="M3.2 10.6H12" stroke="#111" stroke-width="1.1"/><path d="M1.8 10.4H3.4" stroke="#2cb43c" stroke-width="1.1"/><path d="M.6 7.8V13.6" stroke="#8a8a8a" stroke-width=".9"/><path d="M1 13.8H14.2V9.6" fill="none" stroke="#111" stroke-width="1.1"/></svg>
<span class="t b" style="left:32.40px;top:628px;letter-spacing:0.428px;">Jednotka CD-ROM 2</span>
<span class="t" style="left:14.40px;top:641px;letter-spacing:-0.415px;">Disk DVD (M:)</span>
<span class="t" style="left:14.40px;top:667px;letter-spacing:-0.343px;">Žádné médium</span>
<div style="left:7px;top:691px;width:771px;height:1px;background:#faf9f3"></div>
<div style="left:7px;top:692px;width:1px;height:69px;background:#f6f5ee"></div>
<div style="left:161px;top:691px;width:1px;height:70px;background:#aca899"></div>
<div style="left:162px;top:691px;width:1px;height:70px;background:#f8f7f1"></div>
<div style="left:7px;top:761px;width:771px;height:1px;background:#aca899"></div>
<svg width="17" height="15" viewBox="0 0 17 15" style="left:16px;top:696px"><defs><linearGradient id="cdg" x1="0" y1=".2" x2="1" y2=".5"><stop offset="0" stop-color="#2fc24a"/><stop offset=".4" stop-color="#5fd060"/><stop offset=".55" stop-color="#f2e65a"/><stop offset=".7" stop-color="#e8f0f0"/><stop offset="1" stop-color="#b8d8e0"/></linearGradient></defs><circle cx="10.4" cy="5.6" r="5" fill="url(#cdg)"/><path d="M5.8 9.6L10.4 5.6L12.6 9.8Z" fill="#e9efe9"/><path d="M11.6 7.2L14.4 8.6L12.6 10.2Z" fill="#38c848"/><path d="M13.6 1.6A5.2 5.2 0 0 1 14.8 8.4" fill="none" stroke="#111" stroke-width="1.2"/><circle cx="10.4" cy="5.6" r="1.1" fill="#fff" stroke="#111" stroke-width="1"/><path d="M1 8H5.6L7 10H14.3V13.4H1Z" fill="#f4f4f4"/><path d="M1 11.4H14.3V13.4H1Z" fill="#bdbdbd"/><path d="M3.2 10.6H12" stroke="#111" stroke-width="1.1"/><path d="M1.8 10.4H3.4" stroke="#2cb43c" stroke-width="1.1"/><path d="M.6 7.8V13.6" stroke="#8a8a8a" stroke-width=".9"/><path d="M1 13.8H14.2V9.6" fill="none" stroke="#111" stroke-width="1.1"/></svg>
<span class="t b" style="left:32.40px;top:699px;letter-spacing:0.428px;">Jednotka CD-ROM 3</span>
<span class="t" style="left:14.40px;top:712px;letter-spacing:-0.388px;">Disk DVD (E:)</span>
<span class="t" style="left:14.40px;top:738px;letter-spacing:-0.343px;">Žádné médium</span>
<div style="left:163px;top:331px;width:587px;height:1px;background:#c4c1b0"></div>
<div style="left:750px;top:265px;width:1px;height:67px;background:#aca899"></div>
<div style="left:751px;top:265px;width:1px;height:67px;background:#f8f7f1"></div>
<div style="left:163px;top:402px;width:612px;height:1px;background:#c4c1b0"></div>
<div style="left:774px;top:337px;width:1px;height:66px;background:#aca899"></div>
<div style="left:163px;top:473px;width:300px;height:1px;background:#c4c1b0"></div>
<div style="left:164px;top:270px;width:289px;height:11px;background:#000080"></div>
<div style="left:164px;top:281px;width:289px;height:49px;background:#efecde"></div>
<div style="left:167px;top:284px;width:283px;height:43px;background:#00ff00"></div>
<span class="t b p" style="left:170.90px;top:288px;letter-spacing:0.183px;">111 CCC Hlavní oddíl  (C:)</span>
<span class="t p" style="left:170.60px;top:301px;letter-spacing:0.169px;">244,14</span>
<span class="t p" style="left:207.70px;top:301px;letter-spacing:-1.106px;">GB</span>
<span class="t p" style="left:224.30px;top:301px;letter-spacing:-1.411px;">NTFS</span>
<span class="t p" style="left:170.90px;top:314px;letter-spacing:-0.215px;">V pořádku (Systém)</span>
<div style="left:455px;top:267px;width:291px;height:67px;border:solid #0f7a0f;border-width:2px 4px;background:#ece9d8"></div>
<div style="left:460px;top:270px;width:280px;height:11px;background:#0000ff"></div>
<div style="left:460px;top:281px;width:280px;height:49px;background:#efecde"></div>
<div style="left:463px;top:284px;width:274px;height:43px;background:#00ff00"></div>
<span class="t b p" style="left:466.90px;top:288px;letter-spacing:0.257px;">Druhý oddíl  (L:)</span>
<span class="t p" style="left:466.60px;top:301px;letter-spacing:0.169px;">232,79</span>
<span class="t p" style="left:503.70px;top:301px;letter-spacing:-1.106px;">GB</span>
<span class="t p" style="left:520.30px;top:301px;letter-spacing:-1.411px;">NTFS</span>
<span class="t p" style="left:466.90px;top:314px;letter-spacing:-0.295px;">V pořádku</span>
<div style="left:164px;top:341px;width:609px;height:11px;background:#000080"></div>
<div style="left:164px;top:352px;width:609px;height:49px;background:#efecde"></div>
<div style="left:167px;top:355px;width:603px;height:43px;background:#00ff00"></div>
<span class="t b p" style="left:170.90px;top:359px;letter-spacing:0.364px;">Záložní  (D:)</span>
<span class="t p" style="left:170.60px;top:372px;letter-spacing:0.169px;">931,51</span>
<span class="t p" style="left:207.70px;top:372px;letter-spacing:-1.106px;">GB</span>
<span class="t p" style="left:224.30px;top:372px;letter-spacing:-1.411px;">NTFS</span>
<span class="t p" style="left:170.90px;top:385px;letter-spacing:-0.139px;">V pořádku (Aktivní)</span>
<div style="left:164px;top:412px;width:296px;height:11px;background:#000080"></div>
<div style="left:164px;top:423px;width:296px;height:49px;background:#efecde"></div>
<div style="left:167px;top:426px;width:290px;height:43px;background:#00ff00"></div>
<span class="t b p" style="left:170.90px;top:430px;letter-spacing:0.391px;">Byl to hlavní   (I:)</span>
<span class="t p" style="left:170.60px;top:443px;letter-spacing:0.169px;">334,78</span>
<span class="t p" style="left:207.70px;top:443px;letter-spacing:-1.106px;">GB</span>
<span class="t p" style="left:224.30px;top:443px;letter-spacing:-1.411px;">NTFS</span>
<span class="t p" style="left:170.90px;top:456px;letter-spacing:-0.139px;">V pořádku (Aktivní)</span>
<div style="left:462px;top:409px;width:314px;height:67px;border:solid #0f7a0f;border-width:2px 4px;background:#ece9d8"></div>
<div style="left:467px;top:412px;width:303px;height:11px;background:#0000ff"></div>
<div style="left:467px;top:423px;width:303px;height:49px;background:#efecde"></div>
<div style="left:470px;top:426px;width:297px;height:43px;background:#00ff00"></div>
<span class="t b p" style="left:473.90px;top:430px;letter-spacing:0.281px;">Z hlavního  (F:)</span>
<span class="t p" style="left:473.60px;top:443px;letter-spacing:0.169px;">596,74</span>
<span class="t p" style="left:510.70px;top:443px;letter-spacing:-1.106px;">GB</span>
<span class="t p" style="left:527.30px;top:443px;letter-spacing:-1.411px;">NTFS</span>
<span class="t p" style="left:473.90px;top:456px;letter-spacing:-0.263px;">V pořádku</span>
<div style="left:7px;top:792px;width:771px;height:1px;background:#fff"></div>
<div style="left:5px;top:811px;width:774px;height:1px;background:#8a877a"></div>
<div style="left:4px;top:812px;width:776px;height:2px;background:#fff"></div>
<div style="left:12px;top:796px;width:11px;height:13px;background:#fff"></div>
<div style="left:12px;top:796px;width:10px;height:12px;background:#000080"></div>
<span class="t" style="left:27.00px;top:795px;letter-spacing:-0.083px;">Primární oddíl</span>
<div style="left:99px;top:796px;width:11px;height:13px;background:#fff"></div>
<div style="left:99px;top:796px;width:10px;height:12px;background:#008000"></div>
<span class="t" style="left:114.40px;top:795px;letter-spacing:0.033px;">Rozšířený oddíl</span>
<div style="left:197px;top:796px;width:11px;height:13px;background:#fff"></div>
<div style="left:197px;top:796px;width:10px;height:12px;background:#0000ff"></div>
<span class="t" style="left:211.50px;top:795px;">Logická jednotka</span>
<div style="left:4px;top:814px;width:776px;height:23px;background:linear-gradient(to bottom,#e6e3d3 0,#efede1 3px,#f1efe4 60%,#eeebdd 100%)"></div>
<div style="left:4px;top:836px;width:776px;height:1px;background:#fbfaf5"></div>
<div style="left:691px;top:816px;width:1px;height:20px;background:#c5c2b2"></div>
<div style="left:692px;top:816px;width:1px;height:20px;background:#fff"></div>
<div style="left:776px;top:816px;width:1px;height:20px;background:#c5c2b2"></div>
<div style="left:777px;top:816px;width:1px;height:20px;background:#fff"></div>
</div>
</body></html>
